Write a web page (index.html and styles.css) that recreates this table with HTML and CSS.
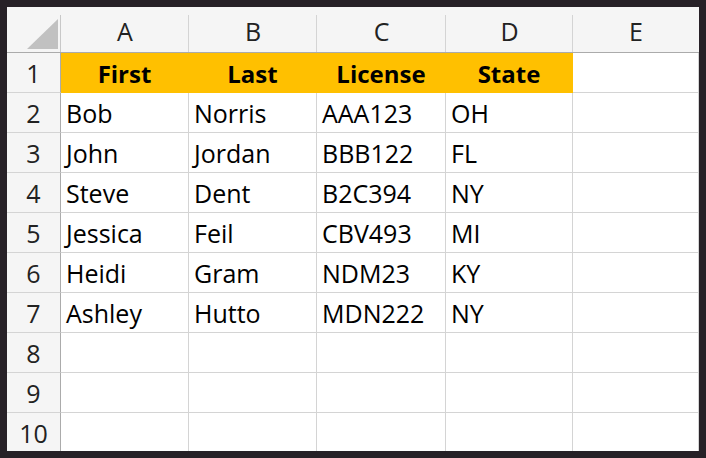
FILE: index.html
```html
<!DOCTYPE html>
<html>
<head>
<meta charset="utf-8">
<link rel="stylesheet" href="styles.css">
</head>
<body>
<div class="sheet">
  <div class="hd corner"><svg class="tri" width="31" height="30" viewBox="0 0 31 30"><polygon points="31,0 31,30 0,30" fill="#c1c1c1"/></svg></div>
  <div class="hd col">A</div>
  <div class="hd col">B</div>
  <div class="hd col">C</div>
  <div class="hd col">D</div>
  <div class="hd col last">E</div>

  <div class="rh">1</div>
  <div class="c y b">First</div><div class="c y b">Last</div><div class="c y b">License</div><div class="c y b">State</div><div class="c"></div>

  <div class="rh">2</div>
  <div class="c">Bob</div><div class="c">Norris</div><div class="c">AAA123</div><div class="c">OH</div><div class="c"></div>
  <div class="rh">3</div>
  <div class="c">John</div><div class="c">Jordan</div><div class="c">BBB122</div><div class="c">FL</div><div class="c"></div>
  <div class="rh">4</div>
  <div class="c">Steve</div><div class="c">Dent</div><div class="c">B2C394</div><div class="c">NY</div><div class="c"></div>
  <div class="rh">5</div>
  <div class="c">Jessica</div><div class="c">Feil</div><div class="c">CBV493</div><div class="c">MI</div><div class="c"></div>
  <div class="rh">6</div>
  <div class="c">Heidi</div><div class="c">Gram</div><div class="c">NDM23</div><div class="c">KY</div><div class="c"></div>
  <div class="rh">7</div>
  <div class="c">Ashley</div><div class="c">Hutto</div><div class="c">MDN222</div><div class="c">NY</div><div class="c"></div>
  <div class="rh">8</div>
  <div class="c"></div><div class="c"></div><div class="c"></div><div class="c"></div><div class="c"></div>
  <div class="rh">9</div>
  <div class="c"></div><div class="c"></div><div class="c"></div><div class="c"></div><div class="c"></div>
  <div class="rh">10</div>
  <div class="c"></div><div class="c"></div><div class="c"></div><div class="c"></div><div class="c"></div>
</div>
</body>
</html>
```
FILE: styles.css
```css
html, body {
  margin: 0;
  padding: 0;
  background: #272127;
}
body {
  padding: 7px 0 0 7px;
  height: 458px;
  box-sizing: border-box;
  overflow: hidden;
}
.sheet {
  width: 692px;
  height: 444px;
  overflow: hidden;
  background: #fff;
  display: grid;
  grid-template-columns: 54px 128px 128px 129px 127px 126px;
  grid-template-rows: 46px repeat(10, 40px);
  font-family: "Open Sans", "Noto Sans", sans-serif;
  font-size: 25px;
  line-height: 1;
  color: #000;
}
.hd {
  background: #f5f5f5;
  border-bottom: 1px solid #ababab;
  position: relative;
  display: flex;
  align-items: center;
  justify-content: center;
  color: #222;
  padding-top: 4px;
  box-sizing: border-box;
}
.hd::after {
  content: "";
  position: absolute;
  right: 0;
  top: 8px;
  bottom: 0;
  width: 1px;
  background: #d4d4d4;
}
.hd.corner::after { background: #c8c8c8; }
.hd.last::after { display: none; }
.corner { justify-content: flex-start; align-items: flex-start; }
.tri { position: absolute; left: 20px; top: 12px; }
.rh {
  background: #f5f5f5;
  border-right: 1px solid #ababab;
  border-bottom: 1px solid #d4d4d4;
  display: flex;
  align-items: center;
  justify-content: center;
  color: #222;
  box-sizing: border-box;
  padding-top: 2px;
}
.c {
  border-right: 1px solid #d4d4d4;
  border-bottom: 1px solid #d4d4d4;
  box-sizing: border-box;
  display: flex;
  align-items: center;
  padding-left: 5px;
  padding-top: 2px;
  white-space: nowrap;
}
.c.y {
  background: #ffc000;
  border-color: #ffc000;
  justify-content: center;
  padding-left: 0;
}
.b { font-weight: 700; font-size: 24px; }
```
